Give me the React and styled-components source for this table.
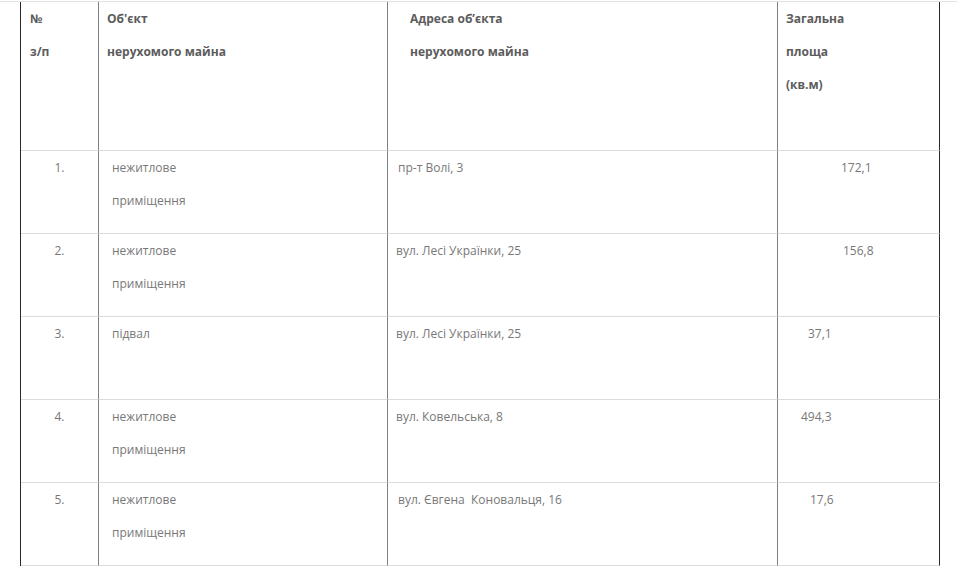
import React from "react";
import styled, { createGlobalStyle } from "styled-components";

const Global = createGlobalStyle`
  html, body { margin: 0; padding: 0; background: #fff; }
  body { font-family: "Open Sans", "Liberation Sans", sans-serif; }
`;

const Page = styled.div`
  margin-top: 1px;
  border-top: 1px solid #e2e2e2;
  padding-left: 20px;
`;

const Grid = styled.div`
  display: grid;
  grid-template-columns: 78px 289px 390px 162px;
  width: 919px;
  border-left: 1px solid #2a2a2a;
`;

const Cell = styled.div`
  box-sizing: border-box;
  height: ${(p) => (p.$head ? 149 : 83)}px;
  border-bottom: 1px solid #dcdcdc;
  border-right: 1px solid ${(p) => (p.$last ? "#2a2a2a" : "#808080")};
  padding-left: ${(p) => p.$pl || 0}px;
  text-align: ${(p) => (p.$center ? "center" : "left")};
  font-size: 12px;
  line-height: 33px;
  font-weight: ${(p) => (p.$head ? 700 : 400)};
  color: ${(p) => (p.$head ? "#5c5c5c" : "#787878")};
  white-space: nowrap;
`;

const Line = styled.div``;

const header = [
  { lines: ["№", "з/п"], pl: 9 },
  { lines: ["Об'єкт", "нерухомого майна"], pl: 8 },
  { lines: ["Адреса об’єкта", "нерухомого майна"], pl: 22 },
  { lines: ["Загальна", "площа", "(кв.м)"], pl: 8, last: true },
];

const rows = [
  { n: "1.", obj: ["нежитлове", "приміщення"], addr: "пр-т Волі, 3", addrPl: 10, area: "172,1", areaPl: 63 },
  { n: "2.", obj: ["нежитлове", "приміщення"], addr: "вул. Лесі Українки, 25", addrPl: 8, area: "156,8", areaPl: 65 },
  { n: "3.", obj: ["підвал"], addr: "вул. Лесі Українки, 25", addrPl: 8, area: "37,1", areaPl: 30 },
  { n: "4.", obj: ["нежитлове", "приміщення"], addr: "вул. Ковельська, 8", addrPl: 8, area: "494,3", areaPl: 23 },
  { n: "5.", obj: ["нежитлове", "приміщення"], addr: "вул. Євгена\u00a0 Коновальця, 16", addrPl: 10, area: "17,6", areaPl: 32 },
];

export default function App() {
  return (
    <>
      <Global />
      <Page>
        <Grid>
          {header.map((h, i) => (
            <Cell key={i} $head $pl={h.pl} $last={h.last}>
              {h.lines.map((l, j) => (
                <Line key={j}>{l}</Line>
              ))}
            </Cell>
          ))}
          {rows.map((r, i) => (
            <React.Fragment key={i}>
              <Cell $center>{r.n}</Cell>
              <Cell $pl={13}>
                {r.obj.map((l, j) => (
                  <Line key={j}>{l}</Line>
                ))}
              </Cell>
              <Cell $pl={r.addrPl}>{r.addr}</Cell>
              <Cell $pl={r.areaPl} $last>
                {r.area}
              </Cell>
            </React.Fragment>
          ))}
        </Grid>
      </Page>
    </>
  );
}
